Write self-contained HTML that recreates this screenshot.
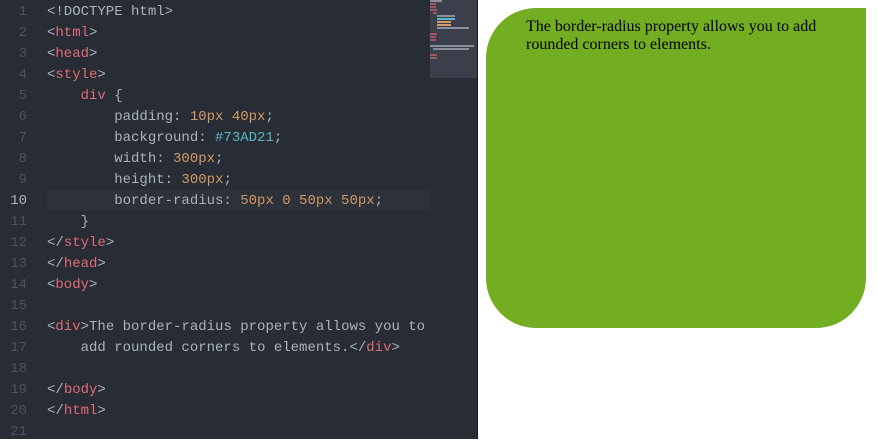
<!DOCTYPE html>
<html><head><style>
body{margin:0;width:878px;height:439px;overflow:hidden;background:#fff;position:relative}
#ed{position:absolute;left:0;top:0;width:477px;height:439px;background:#282c34;border-right:1px solid #181a1f;font-family:"Liberation Mono",monospace;font-size:14px}
.ln{position:absolute;left:0;width:27px;text-align:right;color:#4b5263;margin-top:3px}
.cd{position:absolute;left:47px;color:#abb2bf;white-space:pre;margin-top:3px}
.t{color:#e06c75}.n{color:#d19a66}.c{color:#56b6c2}
#hl{position:absolute;left:47px;top:189px;width:383px;height:21px;background:#2c313a}
#mm{position:absolute;left:430px;top:0;width:47px;height:78px;background:#3a3f4b}
#mm i{position:absolute;height:2px;display:block}
#box{position:absolute;left:486px;top:8px;width:300px;height:300px;padding:10px 40px;background:#73AD21;border-radius:50px 0 50px 50px;font-family:"Liberation Serif",serif;font-size:16px;line-height:18px;color:#000}
</style></head><body>
<div id="ed">
<div id="hl"></div>
<div id="mm">
<i style="left:0;top:0;width:12px;background:#8a8f99"></i>
<i style="left:0;top:3px;width:6px;background:#a05560"></i>
<i style="left:0;top:6px;width:6px;background:#a05560"></i>
<i style="left:0;top:9px;width:7px;background:#a05560"></i>
<i style="left:3px;top:12px;width:4px;background:#a05560"></i>
<i style="left:7px;top:15px;width:18px;background:#8a8f99"></i>
<i style="left:7px;top:18px;width:18px;background:#56b6c2"></i>
<i style="left:7px;top:21px;width:14px;background:#d19a66"></i>
<i style="left:7px;top:24px;width:14px;background:#d19a66"></i>
<i style="left:7px;top:27px;width:32px;background:#8a8f99"></i>
<i style="left:0;top:33px;width:7px;background:#a05560"></i>
<i style="left:0;top:36px;width:6px;background:#a05560"></i>
<i style="left:0;top:39px;width:6px;background:#a05560"></i>
<i style="left:0;top:45px;width:44px;background:#8a8f99"></i>
<i style="left:3px;top:48px;width:36px;background:#8a8f99"></i>
<i style="left:0;top:54px;width:7px;background:#a05560"></i>
<i style="left:0;top:57px;width:7px;background:#a05560"></i>
</div>
<div class="ln" style="top:1px">1</div><div class="cd" style="top:1px">&lt;!DOCTYPE html&gt;</div>
<div class="ln" style="top:22px">2</div><div class="cd" style="top:22px">&lt;<span class="t">html</span>&gt;</div>
<div class="ln" style="top:43px">3</div><div class="cd" style="top:43px">&lt;<span class="t">head</span>&gt;</div>
<div class="ln" style="top:64px">4</div><div class="cd" style="top:64px">&lt;<span class="t">style</span>&gt;</div>
<div class="ln" style="top:85px">5</div><div class="cd" style="top:85px">    <span class="t">div</span> {</div>
<div class="ln" style="top:106px">6</div><div class="cd" style="top:106px">        padding: <span class="n">10px 40px</span>;</div>
<div class="ln" style="top:127px">7</div><div class="cd" style="top:127px">        background: <span class="c">#73AD21</span>;</div>
<div class="ln" style="top:148px">8</div><div class="cd" style="top:148px">        width: <span class="n">300px</span>;</div>
<div class="ln" style="top:169px">9</div><div class="cd" style="top:169px">        height: <span class="n">300px</span>;</div>
<div class="ln" style="top:190px;color:#abb2bf">10</div><div class="cd" style="top:190px">        border-radius: <span class="n">50px 0 50px 50px</span>;</div>
<div class="ln" style="top:211px">11</div><div class="cd" style="top:211px">    }</div>
<div class="ln" style="top:232px">12</div><div class="cd" style="top:232px">&lt;/<span class="t">style</span>&gt;</div>
<div class="ln" style="top:253px">13</div><div class="cd" style="top:253px">&lt;/<span class="t">head</span>&gt;</div>
<div class="ln" style="top:274px">14</div><div class="cd" style="top:274px">&lt;<span class="t">body</span>&gt;</div>
<div class="ln" style="top:295px">15</div>
<div class="ln" style="top:316px">16</div><div class="cd" style="top:316px">&lt;<span class="t">div</span>&gt;The border-radius property allows you to</div>
<div class="ln" style="top:337px">17</div><div class="cd" style="top:337px">    add rounded corners to elements.&lt;/<span class="t">div</span>&gt;</div>
<div class="ln" style="top:358px">18</div>
<div class="ln" style="top:379px">19</div><div class="cd" style="top:379px">&lt;/<span class="t">body</span>&gt;</div>
<div class="ln" style="top:400px">20</div><div class="cd" style="top:400px">&lt;/<span class="t">html</span>&gt;</div>
<div class="ln" style="top:421px">21</div>
</div>
<div id="box">The border-radius property allows you to add rounded corners to elements.</div>
</body></html>
